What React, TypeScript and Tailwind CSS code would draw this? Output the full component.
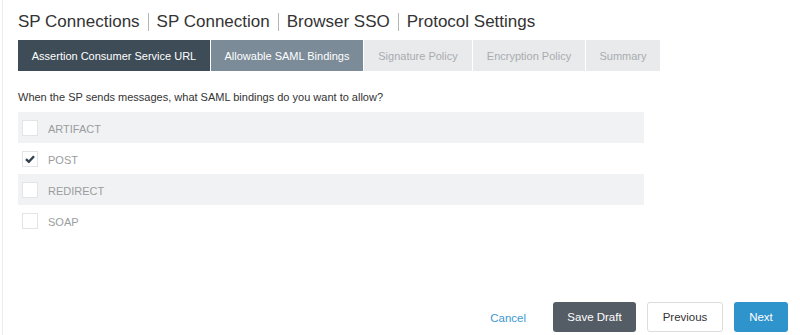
import React from "react";

const tabs = [
  { label: "Assertion Consumer Service URL", w: "w-[192px]", cls: "bg-[#3e4c57] text-white" },
  { label: "Allowable SAML Bindings", w: "w-[152px]", cls: "bg-[#7b8b98] text-white" },
  { label: "Signature Policy", w: "w-[108px]", cls: "bg-[#e8eaec] text-[#a9acaf]" },
  { label: "Encryption Policy", w: "w-[112px]", cls: "bg-[#e8eaec] text-[#a9acaf]" },
  { label: "Summary", w: "w-[74px]", cls: "bg-[#e8eaec] text-[#a9acaf]" },
];

const rows = [
  { label: "ARTIFACT", checked: false, shaded: true },
  { label: "POST", checked: true, shaded: false },
  { label: "REDIRECT", checked: false, shaded: true },
  { label: "SOAP", checked: false, shaded: false },
];

function Sep() {
  return <span className="mx-[8px] inline-block h-[18px] w-px bg-[#b5b5b5]" />;
}

export default function App() {
  return (
    <div
      className="relative h-[335px] w-[800px] overflow-hidden bg-white"
      style={{ fontFamily: '"Liberation Sans", Arial, sans-serif' }}
    >
      <div className="absolute left-[2px] top-0 h-full w-px bg-[#ececec]" />
      <div className="flex h-full flex-col pl-[18px]">
        <div className="flex h-[40px] items-center pt-[3px] text-[17px] text-[#333]">
          <span>SP Connections</span>
          <Sep />
          <span>SP Connection</span>
          <Sep />
          <span>Browser SSO</span>
          <Sep />
          <span>Protocol Settings</span>
        </div>
        <div className="flex h-[31px] gap-px">
          {tabs.map((t) => (
            <div
              key={t.label}
              className={`flex items-center justify-center pt-px text-[11px] ${t.w} ${t.cls}`}
            >
              {t.label}
            </div>
          ))}
        </div>
        <div className="mt-[19px] text-[11px] leading-[14px] text-[#333]">
          When the SP sends messages, what SAML bindings do you want to allow?
        </div>
        <div className="mt-[8px] w-[626px]">
          {rows.map((r) => (
            <div
              key={r.label}
              className={`flex h-[31px] items-center ${r.shaded ? "bg-[#f1f2f3]" : "bg-white"}`}
            >
              <div className="ml-[4px] flex h-[16px] w-[16px] items-center justify-center border border-[#e2e4e6] bg-white">
                {r.checked && (
                  <svg width="10" height="8" viewBox="0 0 10 8">
                    <path d="M1 4.2 L3.8 6.8 L9 1.2" fill="none" stroke="#34434f" strokeWidth="2.4" />
                  </svg>
                )}
              </div>
              <span className="ml-[10px] pt-[3px] text-[11px] text-[#9a9da0]">{r.label}</span>
            </div>
          ))}
        </div>
        <div className="mt-auto mb-[3px] flex items-center justify-end pr-[12px]">
          <button className="mr-[27px] pt-[3px] text-[11.5px] text-[#3d98cf]">Cancel</button>
          <button className="h-[30px] w-[83px] rounded-[3px] bg-[#545c65] pt-[2px] text-[11.5px] text-white">
            Save Draft
          </button>
          <button className="ml-[11px] h-[30px] w-[76px] rounded-[3px] border border-[#dcdcdc] bg-white pt-[2px] text-[11.5px] text-[#333]">
            Previous
          </button>
          <button className="ml-[11px] h-[30px] w-[54px] rounded-[3px] bg-[#2f93cc] pt-[2px] text-[11.5px] text-white">
            Next
          </button>
        </div>
      </div>
    </div>
  );
}
